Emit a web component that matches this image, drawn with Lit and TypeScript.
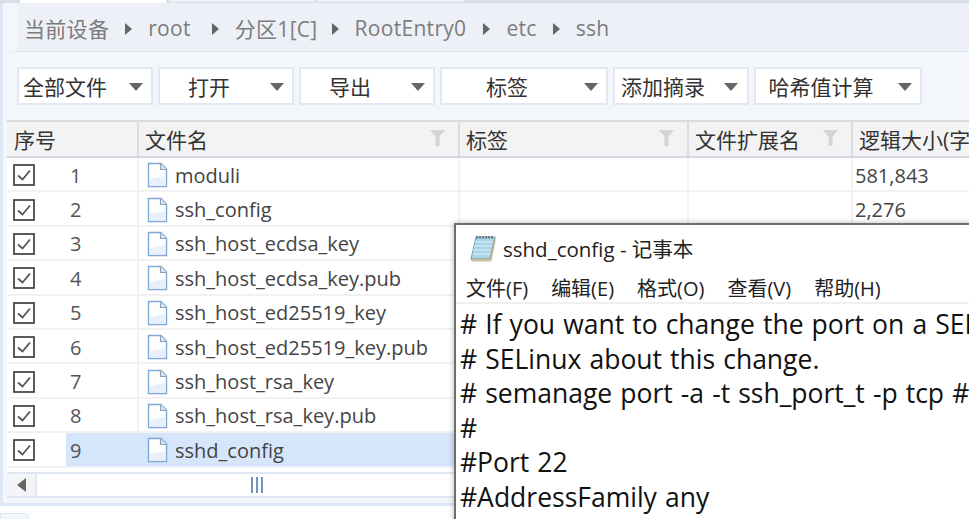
import { LitElement, html, css, svg } from "lit";
import { customElement } from "lit/decorators.js";

const crumbs = [
  { t: "当前设备", gap: 16 },
  { t: "root", gap: 21 },
  { t: "分区1[C]", gap: 14 },
  { t: "RootEntry0", gap: 17 },
  { t: "etc", gap: 16 },
  { t: "ssh", gap: 0 },
];
const buttons = [
  { t: "全部文件", w: 136, cls: "" },
  { t: "打开", w: 136, cls: "center" },
  { t: "导出", w: 136, cls: "center" },
  { t: "标签", w: 168, cls: "center" },
  { t: "添加摘录", w: 136, cls: "inset" },
  { t: "哈希值计算", w: 168, cls: "center" },
];
const files = [
  "moduli",
  "ssh_config",
  "ssh_host_ecdsa_key",
  "ssh_host_ecdsa_key.pub",
  "ssh_host_ed25519_key",
  "ssh_host_ed25519_key.pub",
  "ssh_host_rsa_key",
  "ssh_host_rsa_key.pub",
  "sshd_config",
];
const sizes = ["581,843", "2,276"];
const lines = [
  "# If you want to change the port on a SELinux system, you have to tell",
  "# SELinux about this change.",
  "# semanage port -a -t ssh_port_t -p tcp #PORTNUMBER",
  "#",
  "#Port 22",
  "#AddressFamily any",
];

const fileIcon = svg`<svg width="21" height="26" viewBox="0 0 21 26"><path d="M1.5 1.5H14L19.5 7V24.5H1.5Z" fill="#fff" stroke="#7ea9d6" stroke-width="1.4"/><path d="M2.5 17V23.5H18.5V14Z" fill="#e8f1fb"/><path d="M13.5 1.5V7.5H19.5" fill="#dbe6f2" stroke="#8d9fb3" stroke-width="1.2"/></svg>`;
const check = svg`<svg width="22" height="22" viewBox="0 0 22 22"><rect x="1" y="1" width="20" height="20" fill="#fff" stroke="#4a4a4a" stroke-width="1.8"/><path d="M5 11.5L9.5 15.5L17 6.5" fill="none" stroke="#555" stroke-width="1.8"/></svg>`;
const funnel = svg`<svg width="15" height="16" viewBox="0 0 15 16"><path d="M0 0H15L9.5 6.5V16H5.5V6.5Z" fill="#d4d4d4"/></svg>`;
const notepad = svg`<svg width="28" height="28" viewBox="0 0 26 28"><path d="M6 3H25L20 25H1Z" fill="#a9d3e6" stroke="#6f9db5"/><path d="M5 8H23M4 12H22M3 16H21M2.5 20H20.5" stroke="#e4f2f8" stroke-width="1"/><path d="M1 25H20L25 3V7L21 27H2Z" fill="#d9cda8" stroke="#a89b78" stroke-width=".6"/><path d="M7 2V4.5M10 2V4.5M13 2V4.5M16 2V4.5M19 2V4.5M22 2V4.5" stroke="#555" stroke-width="1.2"/></svg>`;

@customElement("app-root")
export class AppRoot extends LitElement {
  static styles = css`
    :host {
      display: block;
      position: relative;
      width: 969px;
      height: 519px;
      overflow: hidden;
      background: #fff;
      font-family: "Open Sans", "Noto Sans CJK SC", sans-serif;
      color: #444;
    }
    .app { display: flex; flex-direction: column; height: 519px; }
    .tabs { height: 3px; display: flex; gap: 3px; padding-left: 20px; background: #d9dee9; flex: none; }
    .tabs div { width: 146px; height: 2px; background: #eef1f7; }
    .tabs .on { background: #fff; height: 3px; }
    .main {
      flex: none; height: 503px; box-sizing: border-box; display: flex; flex-direction: column;
      border-left: 3px solid #dde7f5; border-bottom: 3px solid #dde7f5; padding-left: 4px;
      background: #f3f6fb;
    }
    .crumbs {
      flex: none; height: 49px; box-sizing: border-box; display: flex; align-items: center;
      padding: 1px 0 0 7px; background: #edf0f6; border-bottom: 1px solid #dce4f0;
      border-left: 10px solid #f3f6fb; font-size: 21px; letter-spacing: 0.3px; color: #7c7c7c; white-space: nowrap;
    }
    .sep {
      flex: none; width: 0; height: 0; border-left: 7px solid #666;
      border-top: 6px solid transparent; border-bottom: 6px solid transparent;
      margin: 2px 16px 0 0;
    }
    .bar { flex: none; height: 68px; box-sizing: border-box; display: flex; gap: 5px; padding: 15px 0 0 10px; }
    .btn {
      height: 38px; box-sizing: border-box; background: #fff; border: 2px solid #e1e8f3;
      display: flex; align-items: center; justify-content: space-between;
      font-size: 21px; color: #333; white-space: nowrap;
    }
    .btn span { padding-left: 4px; }
    .btn.center span { flex: 1; text-align: center; padding-right: 16px; }
    .btn.inset span { padding-left: 6px; }
    .tri { flex: none; width: 0; height: 0; border-top: 8px solid #666; border-left: 7.5px solid transparent; border-right: 7.5px solid transparent; margin: 2px 8px 0 0; }
    .btn.inset .tri { margin-right: 9px; }
    .grid { flex: none; display: flex; flex-direction: column; background: #fff; }
    .head {
      height: 38px; box-sizing: border-box; display: grid; grid-template-columns: 132px 321px 229px 164px 1fr;
      background: #f3f3f3; border-top: 2px solid #d9d9e0; border-bottom: 2px solid #d5d8e2;
      font-size: 21px; color: #333;
    }
    .hc { display: flex; align-items: center; justify-content: space-between; border-right: 2px solid #dcdde3; padding: 0 13px 0 6px; box-sizing: border-box; white-space: nowrap; overflow: hidden; min-width: 0; }
    .hc:first-child { padding-left: 7px; }
    .hc:last-child { border: 0; padding-right: 0; }
    .hc svg { flex: none; margin-bottom: 2px; }
    .row {
      height: 34.4px; box-sizing: border-box; display: grid; grid-template-columns: 59px 73px 321px 229px 164px 1fr;
      border-bottom: 2px solid #f2f2f2; font-size: 20px; color: #444;
    }
    .c { display: flex; align-items: center; padding-top: 2px; border-right: 2px solid #f2f2f2; box-sizing: border-box; min-width: 0; white-space: nowrap; }
    .c:last-child { border: 0; padding-left: 2px; }
    .ck { border: 0; padding-left: 6px; }
    .num { padding-left: 4px; color: #555; }
    .name { padding-left: 8px; gap: 7px; }
    .name svg { flex: none; }
    .row.sel .c:not(.ck) { background: #d5e6fa; border-color: #dce8f8; }
    .row.sel { border-bottom-color: #eef2f9; }
    .pad { flex: none; height: 4px; background: #fff; }
    .scroll { flex: none; height: 26px; box-sizing: border-box; display: flex; background: #fff; border-top: 2px solid #dfe7f3; border-bottom: 2px solid #dfe7f3; }
    .left { flex: none; width: 28px; background: #f3f5f9; border-right: 2px solid #dfe7f3; display: flex; align-items: center; justify-content: center; }
    .left i { width: 0; height: 0; border-right: 9px solid #666; border-top: 7px solid transparent; border-bottom: 7px solid transparent; }
    .thumb { flex: none; width: 440px; display: flex; align-items: center; justify-content: center; gap: 3px; }
    .thumb i { width: 2px; height: 16px; background: #6f94c4; }
    .bottom { flex: 1; background: #fff; position: relative; }
    .btab { position: absolute; left: 0; top: 7px; width: 27px; height: 10px; background: #f3f6fb; border: 1px solid #dfe7f3; border-radius: 0 5px 0 0; }
    .np {
      position: absolute; left: 454px; top: 223px; width: 530px; height: 310px;
      background: #fff; border: 2px solid #6e6e6e; box-sizing: border-box;
      box-shadow: 0 0 6px rgba(0,0,0,.28); display: flex; flex-direction: column;
    }
    .np-title { flex: none; height: 45px; display: flex; align-items: center; gap: 6px; padding-left: 13px; font-size: 20.5px; color: #222; white-space: nowrap; }
    .np-menu { flex: none; height: 34px; box-sizing: border-box; display: flex; gap: 23px; align-items: center; padding: 3px 0 0 10px; font-size: 20px; color: #222; border-bottom: 2px solid #f0f0f0; white-space: nowrap; }
    .np-text { flex: 1; padding: 3px 0 0 4px; font-size: 26.5px; word-spacing: 1.2px; line-height: 34.6px; color: #111; white-space: pre; }
  `;

  render() {
    return html`
      <div class="app">
        <div class="tabs"><div class="on"></div><div></div><div></div></div>
        <div class="main">
          <div class="crumbs">
            ${crumbs.map(
              (c, i) => html`<span style="margin-right:${c.gap}px">${c.t}</span>${i < crumbs.length - 1 ? html`<i class="sep"></i>` : ""}`
            )}
          </div>
          <div class="bar">
            ${buttons.map(
              (b) => html`<div class="btn ${b.cls}" style="width:${b.w}px"><span>${b.t}</span><i class="tri"></i></div>`
            )}
          </div>
          <div class="grid">
            <div class="head">
              <div class="hc">序号</div>
              <div class="hc">文件名${funnel}</div>
              <div class="hc">标签${funnel}</div>
              <div class="hc">文件扩展名${funnel}</div>
              <div class="hc">逻辑大小(字节)</div>
            </div>
            ${files.map(
              (f, i) => html`<div class="row ${i === 8 ? "sel" : ""}">
                <div class="c ck">${check}</div>
                <div class="c num">${i + 1}</div>
                <div class="c name">${fileIcon}<span>${f}</span></div>
                <div class="c"></div>
                <div class="c"></div>
                <div class="c">${sizes[i] ?? ""}</div>
              </div>`
            )}
            <div class="pad"></div>
          </div>
          <div class="scroll">
            <div class="left"><i></i></div>
            <div class="thumb"><i></i><i></i><i></i></div>
          </div>
        </div>
        <div class="bottom"><div class="btab"></div></div>
      </div>
      <div class="np">
        <div class="np-title">${notepad}<span>sshd_config - 记事本</span></div>
        <div class="np-menu">
          <span>文件(F)</span><span>编辑(E)</span><span>格式(O)</span><span>查看(V)</span><span>帮助(H)</span>
        </div>
        <div class="np-text">${lines.join("\n")}</div>
      </div>
    `;
  }
}
